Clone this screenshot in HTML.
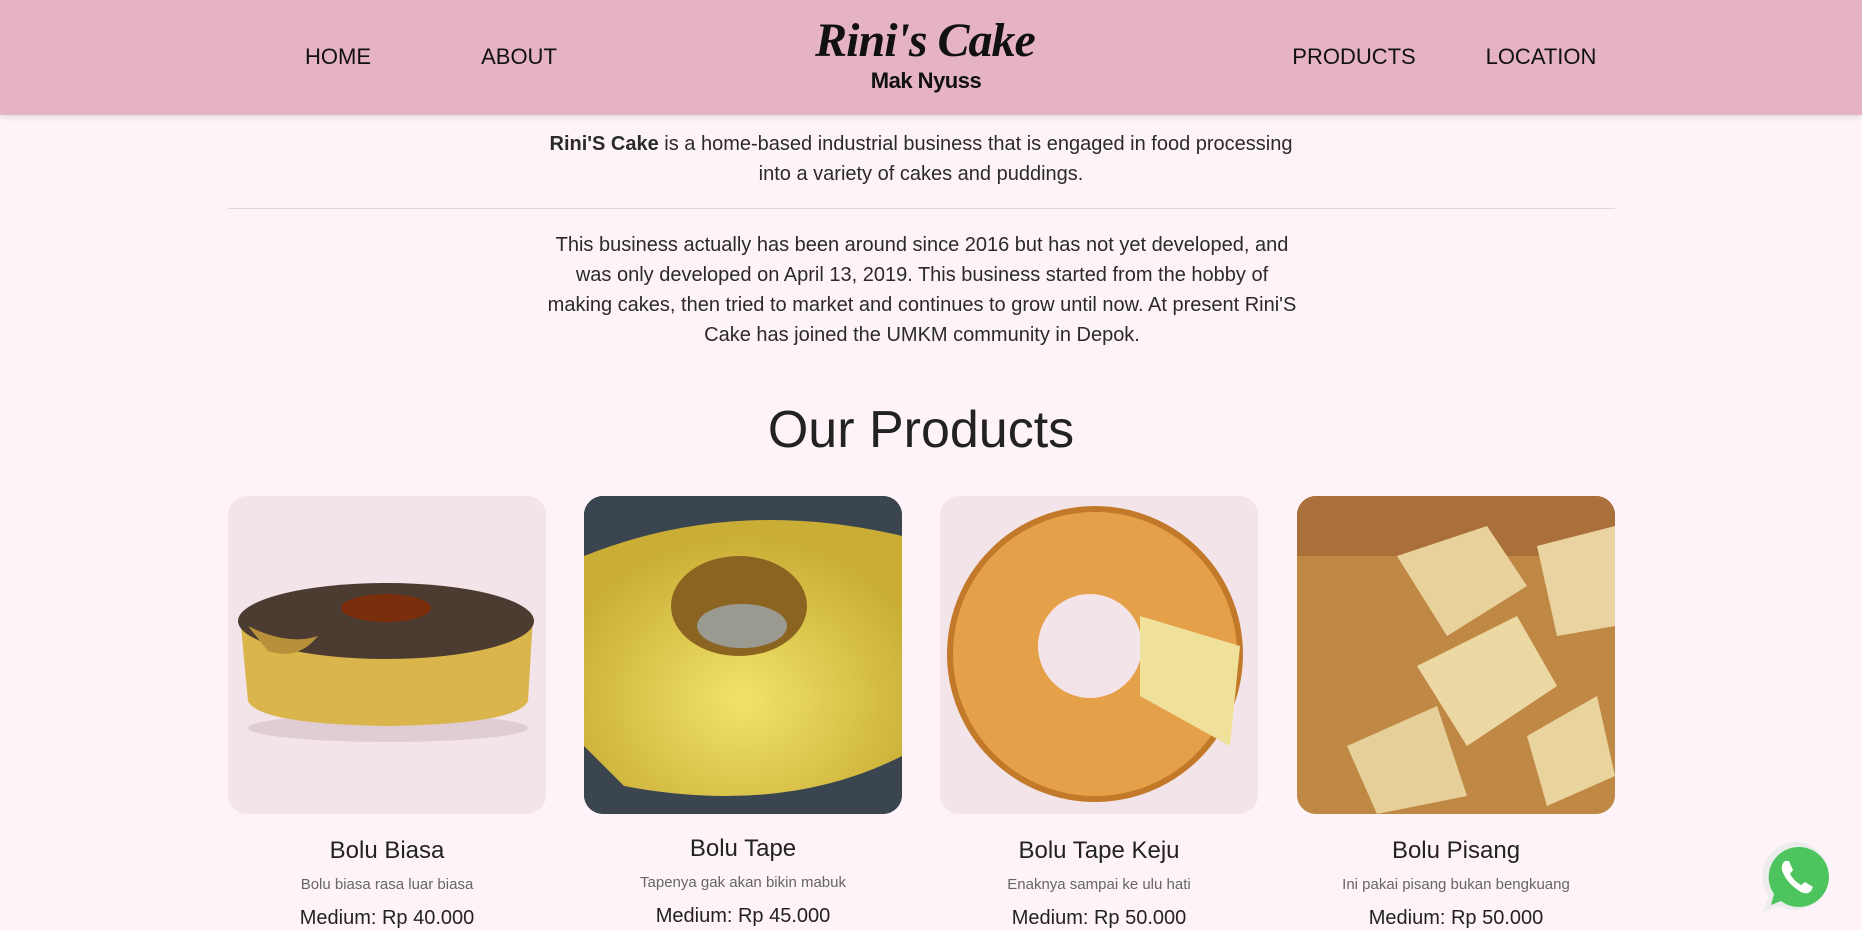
<!DOCTYPE html>
<html><head><meta charset="utf-8"><style>
*{margin:0;padding:0;box-sizing:border-box}
body{width:1862px;height:927px;overflow:hidden;background:#fdf3f9;font-family:"Liberation Sans",sans-serif;color:#222;position:relative}
header{position:absolute;left:0;top:0;width:1862px;height:115px;background:#e6b3c6;box-shadow:0 2px 6px rgba(0,0,0,.12)}
.nav{position:absolute;top:44px;font-size:22px;color:#111;transform:translateX(-50%)}
.logo1{position:absolute;left:800px;top:14px;width:250px;text-align:center;white-space:nowrap;font-family:"Liberation Serif",serif;font-style:italic;font-weight:bold;font-size:48px;line-height:54px;color:#111;letter-spacing:-1px}
.logo2{position:absolute;left:831px;top:68px;width:190px;text-align:center;white-space:nowrap;font-weight:bold;font-size:22px;color:#111;letter-spacing:-0.5px}
.p{position:absolute;text-align:center;font-size:20px;line-height:30px;color:#2a2a2a}
hr{position:absolute;left:228px;top:208px;width:1387px;border:0;border-top:1px solid #e2d6dc}
h1{position:absolute;left:0;width:1842px;top:400px;text-align:center;font-weight:normal;font-size:52px;color:#222}
.card{position:absolute;top:496px;width:318px;height:318px;border-radius:19px;overflow:hidden}
.t{position:absolute;width:318px;text-align:center}
.name{top:837px;font-size:24px;color:#222}
.desc{top:876px;font-size:15px;color:#666}
.price{top:907px;font-size:20px;color:#222}
</style></head><body>
<header>
<div class="nav" style="left:338px">HOME</div>
<div class="nav" style="left:519px">ABOUT</div>
<div class="nav" style="left:1354px">PRODUCTS</div>
<div class="nav" style="left:1541px">LOCATION</div>
<div class="logo1">Rini's Cake</div>
<div class="logo2">Mak Nyuss</div>
</header>
<div class="p" style="top:129px;left:531px;width:780px"><b>Rini'S Cake</b> is a home-based industrial business that is engaged in food processing into a variety of cakes and puddings.</div>
<hr>
<div class="p" style="top:230px;left:546px;width:752px">This business actually has been around since 2016 but has not yet developed, and was only developed on April 13, 2019. This business started from the hobby of making cakes, then tried to market and continues to grow until now. At present Rini'S Cake has joined the UMKM community in Depok.</div>
<h1>Our Products</h1>

<div class="card" style="left:228px;background:#f3e4ea">
<svg width="318" height="318"><ellipse cx="160" cy="232" rx="140" ry="14" fill="#e0cdd4"/><path d="M12 120 L20 205 Q30 228 160 230 Q290 228 300 205 L305 120Z" fill="#d9b54c"/><ellipse cx="158" cy="125" rx="148" ry="38" fill="#4b3b30"/><ellipse cx="158" cy="112" rx="45" ry="14" fill="#7a2e0c"/><path d="M20 130 Q60 150 90 140 Q70 165 40 155Z" fill="#b8903a"/></svg></div>
<div class="card" style="left:584px;background:#2a3440">
<svg width="318" height="318"><defs><radialGradient id="g2" cx="50%" cy="65%" r="60%"><stop offset="0" stop-color="#f1e36a"/><stop offset="1" stop-color="#c9ad35"/></radialGradient></defs><rect x="0" y="0" width="318" height="318" fill="#3a4550"/><path d="M0 60 Q150 0 318 40 L318 260 Q200 320 40 290 L0 250Z" fill="url(#g2)"/><ellipse cx="155" cy="110" rx="68" ry="50" fill="#8a6420"/><ellipse cx="158" cy="130" rx="45" ry="22" fill="#9a9a90"/></svg></div>
<div class="card" style="left:940px;background:#f3e4ea">
<svg width="318" height="318"><circle cx="155" cy="158" r="145" fill="#e5a14a"/><circle cx="155" cy="158" r="145" fill="none" stroke="#c27a2a" stroke-width="6"/><circle cx="150" cy="150" r="52" fill="#f3e4ea"/><path d="M200 120 L300 150 L290 250 L200 200Z" fill="#efe09a"/></svg></div>
<div class="card" style="left:1297px;background:#b77a3a">
<svg width="318" height="318"><rect width="318" height="318" fill="#c08845"/><rect x="0" y="0" width="318" height="60" fill="#a9703a"/><path d="M100 60 L190 30 L230 90 L150 140Z" fill="#e8d19a"/><path d="M120 170 L220 120 L260 190 L170 250Z" fill="#ecd8a3"/><path d="M50 250 L140 210 L170 300 L80 318Z" fill="#e6cf98"/><path d="M230 240 L300 200 L318 280 L250 310Z" fill="#ead49e"/><path d="M240 50 L318 30 L318 130 L260 140Z" fill="#e9d3a0"/></svg></div>

<div class="t name" style="left:228px">Bolu Biasa</div><div class="t desc" style="left:228px">Bolu biasa rasa luar biasa</div><div class="t price" style="left:228px">Medium: Rp 40.000</div>
<div class="t name" style="left:584px;top:835px">Bolu Tape</div><div class="t desc" style="left:584px;top:874px">Tapenya gak akan bikin mabuk</div><div class="t price" style="left:584px;top:905px">Medium: Rp 45.000</div>
<div class="t name" style="left:940px">Bolu Tape Keju</div><div class="t desc" style="left:940px">Enaknya sampai ke ulu hati</div><div class="t price" style="left:940px">Medium: Rp 50.000</div>
<div class="t name" style="left:1297px">Bolu Pisang</div><div class="t desc" style="left:1297px">Ini pakai pisang bukan bengkuang</div><div class="t price" style="left:1297px">Medium: Rp 50.000</div>

<svg style="position:absolute;left:1757px;top:838px" width="80" height="80" viewBox="0 0 80 80">
<path d="M40 4 A34 34 0 1 1 22 68 L6 74 L12 58 A34 34 0 0 1 40 4Z" fill="#ececec"/>
<path d="M41 9 A30 30 0 1 1 24 63 L14 67 L17 56 A30 30 0 0 1 41 9Z" fill="#4dc45e"/>
<path d="M28 23 Q24 26 25 32 Q29 45 44 54 Q50 57 54 53 L56 49 L48 44 L44 47 Q37 43 33 36 L36 32 L32 23Z" fill="#fff"/>
</svg>
</body></html>
